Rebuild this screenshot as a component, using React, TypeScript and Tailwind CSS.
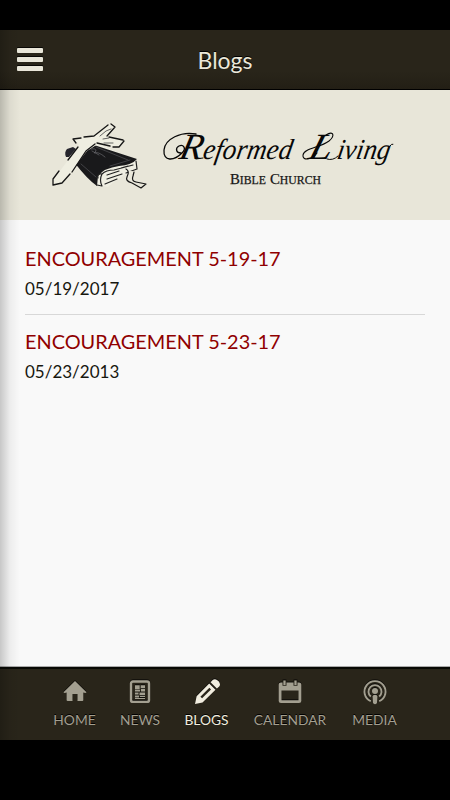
import type { ReactNode } from "react";

const posts = [
  { title: "ENCOURAGEMENT 5-19-17", date: "05/19/2017" },
  { title: "ENCOURAGEMENT 5-23-17", date: "05/23/2013" },
];

function BookAndCross() {
  return (
    <g strokeLinecap="round" strokeLinejoin="round">
      <path d="M67 59 Q64 62 66 67 L69 67 L76 59 L73 57 Z" fill="#25252c" />
      <path d="M96 53 L136 70 L137 80 L126 84 Q114 91 108 97 L98 95 Q92 91 77 75 Z" fill="#efeee2" />
      <path d="M94 55 L137 69 Q132 75 119 76 Q104 78 98 86 L97 96 Q87 89 74 72 Z" fill="#19191b" />
      <path d="M96 57 L128 70 M81 74 L96 87 M110 76 L130 70" stroke="#4b4b4f" strokeWidth=".8" fill="none" />
      <path d="M91 59 Q96 58 96 61 L94 63 Q98 61 105 67 M92 61 L99 65" stroke="#69696d" strokeWidth=".7" fill="none" />
      <path d="M98 88 Q97 83 102 84 Q106 80 114 80 L133 75 M102 84 Q99 90 102 96 L97 95 M107 85 L119 81 M107 89 L122 84 M105 94 L117 89 M121 78 L128 76 M136 71 L137 79 L126 83" stroke="#222" strokeWidth="1.2" fill="none" />
      <path d="M126 79 Q130 81 127 87 Q125 91 132 93 L141 98 L146 94 L136 92 Q131 91 133 86 L134 82" stroke="#161616" strokeWidth="1.2" fill="#e9e7da" />
      <path d="M53 90 L78 57 Q80 52 75 52 L73 48 L94 45 L109 34 L115 36 L107 46 L124 50 L119 57 L98 54 L87 61 L62 94 L54 95 Z" fill="#efeee1" />
      <path d="M53 89 L59 81 M68 70 L78 57 M76 53 L73 49 L81 48 M84 47 L94 46 L108 35 M111 34 L115 37 L107 46 M109 47 L123 50 M124 51 L119 57 L113 57 M110 56 L97 53 M95 54 L86 61 L72 82 M70 84 L62 93 L53 95 L53 89" fill="none" stroke="#151515" strokeWidth="1.3" />
      <path d="M100 46 L106 41 L111 39 M103 49 L109 48 M104 53 L113 53" fill="none" stroke="#555" strokeWidth=".9" />
    </g>
  );
}

function Banner() {
  return (
    <svg className="h-[130px] w-full shrink-0 bg-[#e8e6d9]" viewBox="0 0 450 130" fill="none">
      <BookAndCross />
      <g fill="#080808" fontFamily="'Liberation Serif', serif" fontStyle="italic">
        <text transform="translate(178 69) skewX(-13)" fontSize="37" textLength="23" lengthAdjust="spacingAndGlyphs">R</text>
        <text transform="translate(202 69) skewX(-10)" fontSize="29" textLength="89" lengthAdjust="spacingAndGlyphs">eformed</text>
        <text transform="translate(307 69) skewX(-16)" fontSize="37" textLength="23" lengthAdjust="spacingAndGlyphs">L</text>
        <text transform="translate(336 69) skewX(-10)" fontSize="29" textLength="53" lengthAdjust="spacingAndGlyphs">iving</text>
      </g>
      <g stroke="#080808" strokeLinecap="round">
        <path d="M196 44 C181 41 165 49 164 60 C163 72 174 71 182 63 C187 58 183 54 179 56 C175 58 176 63 181 63" strokeWidth="1.3" />
        <path d="M326 45 C334 40 335 46 329 51 C320 58 304 58 303 65 C302 71 312 70 317 63" strokeWidth="1.1" />
        <path d="M196 69 L203 68 M327 69 Q333 71 338 66 M389 57 Q392 53 393 54" strokeWidth="1" />
      </g>
      <g fill="#171717" stroke="#171717" strokeWidth=".25" fontFamily="'Liberation Serif', serif">
        <text x="230" y="94" fontSize="14.5" textLength="36" lengthAdjust="spacingAndGlyphs">B<tspan fontSize="11.5">IBLE</tspan></text>
        <text x="270" y="94" fontSize="14.5" textLength="51" lengthAdjust="spacingAndGlyphs">C<tspan fontSize="11.5">HURCH</tspan></text>
      </g>
    </svg>
  );
}

function TabIcon({ children }: { children: ReactNode }) {
  return (
    <svg width="30" height="30" viewBox="0 0 30 30" fill="none" className="drop-shadow-[0_-1px_0_rgba(0,0,0,0.65)]">
      {children}
    </svg>
  );
}

const tabs = [
  {
    label: "HOME",
    width: "w-[42px]",
    icon: <path d="M15 4 L26.5 15.3 Q25.8 16.5 23.3 15.5 V23 Q23.3 24 22.3 24 H17.5 V17 H12.5 V24 H7.7 Q6.6 24 6.6 23 V15.5 Q4.2 16.5 3.5 15.3 Z" fill="currentColor" />,
  },
  {
    label: "NEWS",
    width: "w-[39px]",
    icon: (
      <>
        <rect x="6" y="4.5" width="18" height="20.4" rx="2" stroke="currentColor" strokeWidth="2.4" />
        <path d="M10 8.2h4.7v4H10zM15.7 8.2H20v3h-4.3zM10 12.8h5v1.6h-5zM16 12h4v2.4h-4zM10 15.4h3.5v2H10zM14.5 15.4H20v2.5h-5.5zM10 18.4h4v2h-4zM15 18.8h5v1.3h-5zM10 21.1h10v.8H10z" fill="currentColor" />
      </>
    ),
  },
  {
    label: "BLOGS",
    width: "w-[44px]",
    icon: (
      <>
        <path d="M3 27 L4.6 19.3 L17.2 6.6 L23.5 12.8 L10.5 25.5 Z M18.6 5.3 L20.7 3.1 Q22 1.8 24 2.4 Q27.7 4 28 7.4 Q28.1 8.5 27.2 9.4 L24.9 11.6 Z" fill="currentColor" />
        <path d="M8.4 19.7 L17.4 10.8 L19 12.5 L10.1 21.3 Z" fill="#29251a" />
      </>
    ),
  },
  {
    label: "CALENDAR",
    width: "w-[73px]",
    icon: (
      <>
        <path fillRule="evenodd" d="M6 5.5H24Q26.3 5.5 26.3 7.5V24Q26.3 26 24 26H6Q3.7 26 3.7 24V7.5Q3.7 5.5 6 5.5ZM6.5 13.5V23.3H23.5V13.5Z" fill="currentColor" />
        <path d="M7.5 3.5V8.8H11.5V3.5M18.5 3.5V8.8H22.5V3.5" fill="#29251a" />
        <path d="M8.4 3.5h2.2v4.5H8.4zM19.4 3.5h2.2v4.5h-2.2z" fill="currentColor" />
      </>
    ),
  },
  {
    label: "MEDIA",
    width: "w-[46px]",
    icon: (
      <>
        <path d="M10.8 24.2A10.5 10.5 0 1 1 19.2 24.2M10.8 19.6A6.5 6.5 0 1 1 19.2 19.6" stroke="currentColor" strokeWidth="1.9" />
        <circle cx="15" cy="14" r="3" fill="currentColor" />
        <path d="M12.6 19.5Q12.6 17.8 15 17.8T17.4 19.5L17 25.5Q16.8 27.3 15 27.3T13 25.5Z" fill="currentColor" />
      </>
    ),
  },
];

export default function App() {
  return (
    <div className="flex h-[800px] w-[450px] flex-col bg-black pt-[30px] pb-[60px] font-[Lato,sans-serif]">
      <div className="relative flex min-h-0 flex-1 flex-col bg-[#f9f9f9]">
        <header className="grid h-[60px] shrink-0 grid-cols-[1fr_auto_1fr] items-center border-b border-black bg-[linear-gradient(#29251a_70%,#231f15)] px-4 text-[#ebe8da]">
          <button aria-label="Menu" className="flex w-[28px] flex-col gap-[4px] px-px">
            <span className="h-[5px] rounded-[1px] bg-[#e9e6d9] shadow-[0_-1px_0_#090805]" />
            <span className="h-[5px] rounded-[1px] bg-[#e9e6d9] shadow-[0_-1px_0_#090805]" />
            <span className="h-[5px] rounded-[1px] bg-[#e9e6d9] shadow-[0_-1px_0_#090805]" />
          </button>
          <h1 className="mt-0.5 text-[23px] leading-none [text-shadow:0_-1px_0_#000]">Blogs</h1>
        </header>
        <Banner />
        <main className="flex-1 px-[25px] pt-3">
          {posts.map((post) => (
            <article key={post.title} className="h-[83px] border-b border-[#d8d8d8] pt-[13px] last:border-0">
              <h2 className="w-fit text-[19.9px] leading-[26px] whitespace-nowrap text-[#900000]">{post.title}</h2>
              <p className="mt-1.5 text-[17px] leading-6 text-[#17170f]">{post.date}</p>
            </article>
          ))}
        </main>
        <nav className="flex h-[73px] shrink-0 justify-center gap-[25px] border-t-2 border-t-[#090905] bg-[#29251a] pt-2 pl-px shadow-[0_-1px_0_#aaa]">
          {tabs.map((tab) => (
            <a key={tab.label} className={`flex flex-col items-center ${tab.width} ${tab.label === "BLOGS" ? "text-[#f1eddf]" : "text-[#a39f90]"}`}>
              <TabIcon>{tab.icon}</TabIcon>
              <span className="mt-[3px] text-[13.8px] leading-5 whitespace-nowrap [text-shadow:0_-1px_0_#000]">{tab.label}</span>
            </a>
          ))}
        </nav>
        <div className="pointer-events-none absolute inset-y-0 left-0 w-5 bg-linear-to-r from-black/20 via-black/5 to-transparent" />
      </div>
    </div>
  );
}
